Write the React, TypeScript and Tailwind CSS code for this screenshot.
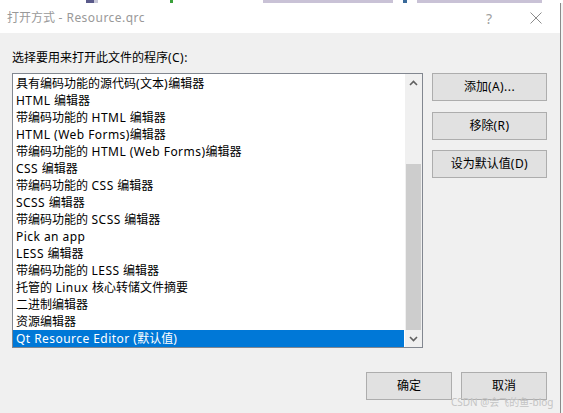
import React from 'react';

const FONT = { fontFamily: '"Noto Sans", "Noto Sans CJK SC", sans-serif' };

const PROGRAMS = [
  '具有编码功能的源代码(文本)编辑器',
  'HTML 编辑器',
  '带编码功能的 HTML 编辑器',
  'HTML (Web Forms)编辑器',
  '带编码功能的 HTML (Web Forms)编辑器',
  'CSS 编辑器',
  '带编码功能的 CSS 编辑器',
  'SCSS 编辑器',
  '带编码功能的 SCSS 编辑器',
  'Pick an app',
  'LESS 编辑器',
  '带编码功能的 LESS 编辑器',
  '托管的 Linux 核心转储文件摘要',
  '二进制编辑器',
  '资源编辑器',
  'Qt Resource Editor (默认值)',
];

// Segoe UI runs a bit wider than Noto Sans, so loosen only the latin runs
const Mixed = ({ text }: { text: string }) => (
  <>
    {text.split(/([\u4e00-\u9fff]+)/).map((part, i) =>
      /[\u4e00-\u9fff]/.test(part) ? (
        <span key={i}>{part}</span>
      ) : (
        <span key={i} className="tracking-[0.45px]">{part}</span>
      )
    )}
  </>
);

const Chevron = ({ up }: { up?: boolean }) => (
  <svg width="9" height="6" viewBox="0 0 9 6">
    <path
      d={up ? 'M1 5 L4.5 1.5 L8 5' : 'M1 1 L4.5 4.5 L8 1'}
      stroke="#606060"
      strokeWidth="1.6"
      fill="none"
    />
  </svg>
);

const Btn = ({ label, className = '' }: { label: string; className?: string }) => (
  <button className={`h-[28px] bg-[#e1e1e1] border border-[#adadad] text-[12px] text-black flex items-center justify-center ${className}`}>
    <Mixed text={label} />
  </button>
);

export default function App() {
  const selected = PROGRAMS.length - 1;

  return (
    <div className="w-[563px] h-[413px] bg-white overflow-hidden flex flex-col relative" style={FONT}>
      {/* background window peeking above the dialog */}
      <div className="h-[3px] flex shrink-0 bg-white">
        <div className="w-[86px]" />
        <div className="w-[8px] bg-[#5a5a8a]" />
        <div className="w-[4px] bg-[#c8c8d8]" />
        <div className="w-[72px]" />
        <div className="w-[3px] bg-[#3aa13a]" />
        <div className="w-[90px]" />
        <div className="w-[130px] bg-[#c9c2d6]" />
        <div className="w-[10px]" />
        <div className="w-[4px] bg-[#3a6a9a]" />
        <div className="w-[10px]" />
        <div className="w-[125px] bg-[#c9c2d6]" />
      </div>

      <div className="flex flex-1">
        <div className="w-[560px] flex flex-col">
          {/* title bar */}
          <div className="h-[30px] bg-white flex items-center pl-[7px] text-[12px] text-[#999999]">
            <span className="flex-1">
              <Mixed text="打开方式 - Resource.qrc" />
            </span>
            <span className="w-[14px] text-[14px] text-[#a0a0a0] mr-[34px] text-center">?</span>
            <svg width="12" height="12" viewBox="0 0 12 12" className="mr-[18px]">
              <path d="M0.5 0.5 L11.5 11.5 M11.5 0.5 L0.5 11.5" stroke="#8c8c8c" strokeWidth="1" />
            </svg>
          </div>

          {/* body */}
          <div className="flex-1 bg-[#f0f0f0] flex flex-col pl-[12px] pr-[13px]">
            <div className="h-[40px] pt-[16px] text-[12px] leading-[17px] text-black">
              <Mixed text="选择要用来打开此文件的程序(C):" />
            </div>

            <div className="flex">
              <div className="w-[411px] h-[275px] border border-[#828790] bg-white flex overflow-hidden">
                <div className="flex-1 pt-px pr-px">
                  {PROGRAMS.map((p, i) => (
                    <div
                      key={p}
                      className={`h-[17px] leading-[17px] pl-[3px] text-[12px] whitespace-nowrap ${
                        i === selected ? 'bg-[#0078d7] text-white' : 'text-black'
                      }`}
                    >
                      <Mixed text={p} />
                    </div>
                  ))}
                </div>
                {/* scrollbar */}
                <div className="w-[17px] bg-[#f0f0f0] flex flex-col">
                  <div className="h-[17px] flex items-center justify-center">
                    <Chevron up />
                  </div>
                  <div className="flex-1 flex flex-col">
                    <div className="h-[73px]" />
                    <div className="flex-1 bg-[#cdcdcd] mx-px" />
                  </div>
                  <div className="h-[17px] flex items-center justify-center">
                    <Chevron />
                  </div>
                </div>
              </div>

              <div className="ml-[9px] flex flex-col">
                <Btn label="添加(A)..." className="w-[115px]" />
                <Btn label="移除(R)" className="w-[115px] mt-[11px]" />
                <Btn label="设为默认值(D)" className="w-[115px] mt-[10px]" />
              </div>
            </div>

            <div className="flex justify-end gap-[9px] mt-[24px]">
              <Btn label="确定" className="w-[86px]" />
              <Btn label="取消" className="w-[86px]" />
            </div>
          </div>
        </div>
        <div className="w-px bg-[#8a8a8a]" />
        <div className="flex-1 bg-[#f4f4f4]" />
      </div>

      {/* watermark */}
      <div className="absolute left-[451px] top-[395px] text-[10px] leading-[14px] text-[#c4c4c4] whitespace-nowrap">
        CSDN @会飞的鱼-blog
      </div>
    </div>
  );
}
